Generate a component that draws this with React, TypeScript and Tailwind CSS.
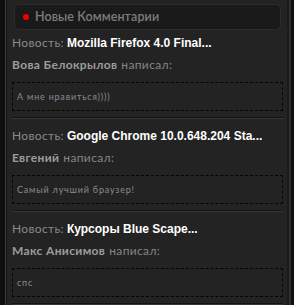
const comments = [
  { title: 'Mozilla Firefox 4.0 Final...', author: 'Вова Белокрылов', text: 'А мне нравиться))))' },
  { title: 'Google Chrome 10.0.648.204 Sta...', author: 'Евгений', text: 'Самый лучший браузер!' },
  { title: 'Курсоры Blue Scape...', author: 'Макс Анисимов', text: 'спс' },
];

const geo = { fontFamily: 'Lato, "Open Sans", "DejaVu Sans", sans-serif' };

export default function App() {
  return (
    <div className="w-[294px] h-[305px] overflow-hidden bg-[#0f0f0f] pl-[5px] pr-[3px]">
      <div className="h-full border-l border-l-[#3a3a3a] border-r-2 border-r-[#303030]">
        <div className="h-full border-l border-l-[#181818] border-r-2 border-r-[#1a1a1a] bg-[#232323] overflow-hidden">
          {/* header */}
          <div className="mt-[4px] ml-[7px] mr-[6px] h-[26px] rounded-[5px] border border-[#2c2c2c] bg-[#1a1a1a] flex items-center pl-[8px] gap-[6px]">
            <span className="w-[6px] h-[6px] rounded-full bg-[#f00000]" />
            <span className="text-[12.5px] font-semibold text-[#7c7c7c] tracking-[0.1px]" style={geo}>
              Новые Комментарии
            </span>
          </div>

          <div className="pl-[5px] pr-[4px] pt-[5px]">
            {comments.map((c) => (
              <div key={c.title}>
                <div className="h-[16px] flex items-center whitespace-nowrap text-[12px]">
                  <span className="text-[#8a8a8a] mr-[3px] tracking-[0.35px]" style={geo}>Новость:</span>
                  <span className="text-white font-bold" style={{ fontFamily: '"Liberation Sans", Arial, sans-serif' }}>
                    {c.title}
                  </span>
                </div>
                <div className="mt-[6px] h-[16px] flex items-center whitespace-nowrap text-[12px] tracking-[0.35px]" style={geo}>
                  <span className="font-bold text-[#9c9c9c] mr-[4px]">{c.author}</span>
                  <span className="text-[#868686]">написал:</span>
                </div>
                <div className="mt-[9px] h-[29px] border border-dashed border-[#050505] flex items-center pl-[4px]">
                  <span className="text-[9px] tracking-[0.8px] text-[#8a8a92]" style={geo}>{c.text}</span>
                </div>
                <div className="mt-[6px] h-px bg-[#141414]" />
                <div className="h-px bg-[#363636]" />
                <div className="h-[9px]" />
              </div>
            ))}
          </div>
        </div>
      </div>
    </div>
  );
}
